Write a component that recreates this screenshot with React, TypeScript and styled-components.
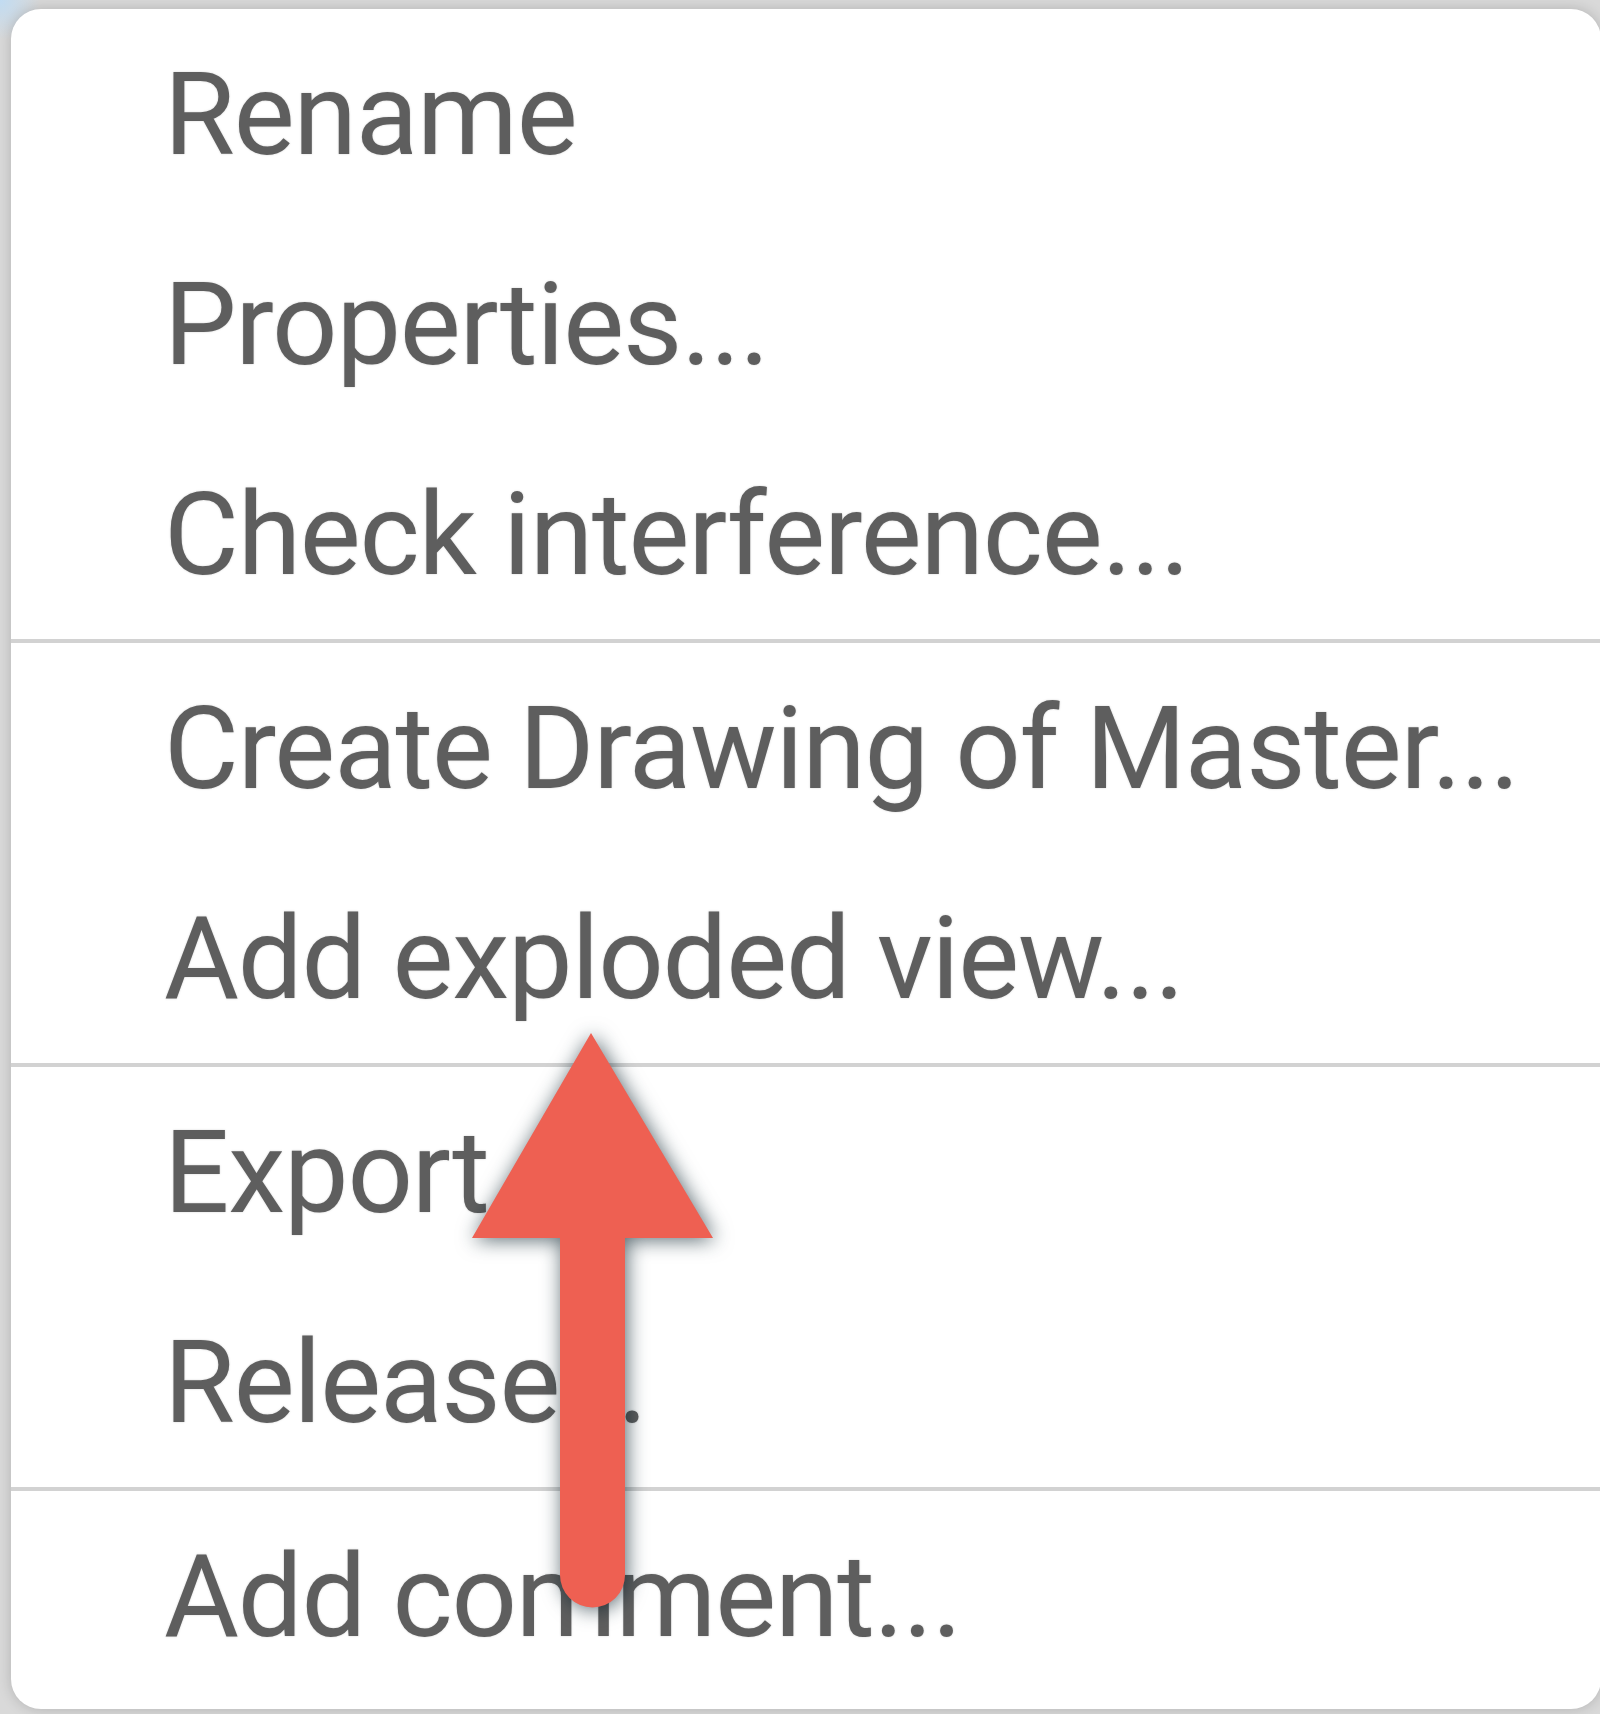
import React from "react";
import styled, { createGlobalStyle } from "styled-components";

const Global = createGlobalStyle`
  html, body {
    margin: 0;
    padding: 0;
    background: #d9d9d9;
  }
  body {
    background:
      radial-gradient(circle at 0 0, rgba(190, 220, 245, 0.9) 0, rgba(190, 220, 245, 0) 40px),
      #d9d9d9;
    min-height: 1714px;
  }
`;

const Page = styled.div`
  position: relative;
  width: 1600px;
  height: 1714px;
  padding: 9px 0 0 11px;
  box-sizing: border-box;
  overflow: hidden;
`;

const Menu = styled.div`
  width: 1590px;
  background: #ffffff;
  border-radius: 30px;
  box-shadow: 0 0 14px rgba(0, 0, 0, 0.18);
  display: flex;
  flex-direction: column;
  padding-bottom: 8px;
  overflow: hidden;
`;

const Item = styled.div`
  height: 210px;
  display: flex;
  align-items: center;
  padding-left: 153px;
  font-family: Roboto, "Liberation Sans", sans-serif;
  font-size: 115px;
  letter-spacing: -1.2px;
  color: #5e5e5e;
  white-space: nowrap;
  text-shadow: 0 0 2px rgba(90, 90, 90, 0.3);
`;

const Separator = styled.div`
  height: 4px;
  background: #d2d2d2;
`;

const ArrowSvg = styled.svg`
  position: absolute;
  left: 440px;
  top: 1000px;
  width: 320px;
  height: 640px;
  overflow: visible;
  filter: drop-shadow(2px 2px 10px rgba(0, 25, 35, 0.65));
`;

const groups: string[][] = [
  ["Rename", "Properties...", "Check interference..."],
  ["Create Drawing of Master...", "Add exploded view..."],
  ["Export...", "Release..."],
  ["Add comment..."],
];

export default function App() {
  return (
    <>
      <Global />
      <Page>
        <Menu>
          {groups.map((g, gi) => (
            <React.Fragment key={gi}>
              {gi > 0 && <Separator />}
              {g.map((label) => (
                <Item key={label}>{label}</Item>
              ))}
            </React.Fragment>
          ))}
        </Menu>
        <ArrowSvg viewBox="0 0 320 640">
          <path
            d="M151 33 L273 238 L185 238 L185 575 A32.5 32.5 0 0 1 120 575 L120 238 L32 238 Z"
            fill="#ee6052"
          />
        </ArrowSvg>
      </Page>
    </>
  );
}
